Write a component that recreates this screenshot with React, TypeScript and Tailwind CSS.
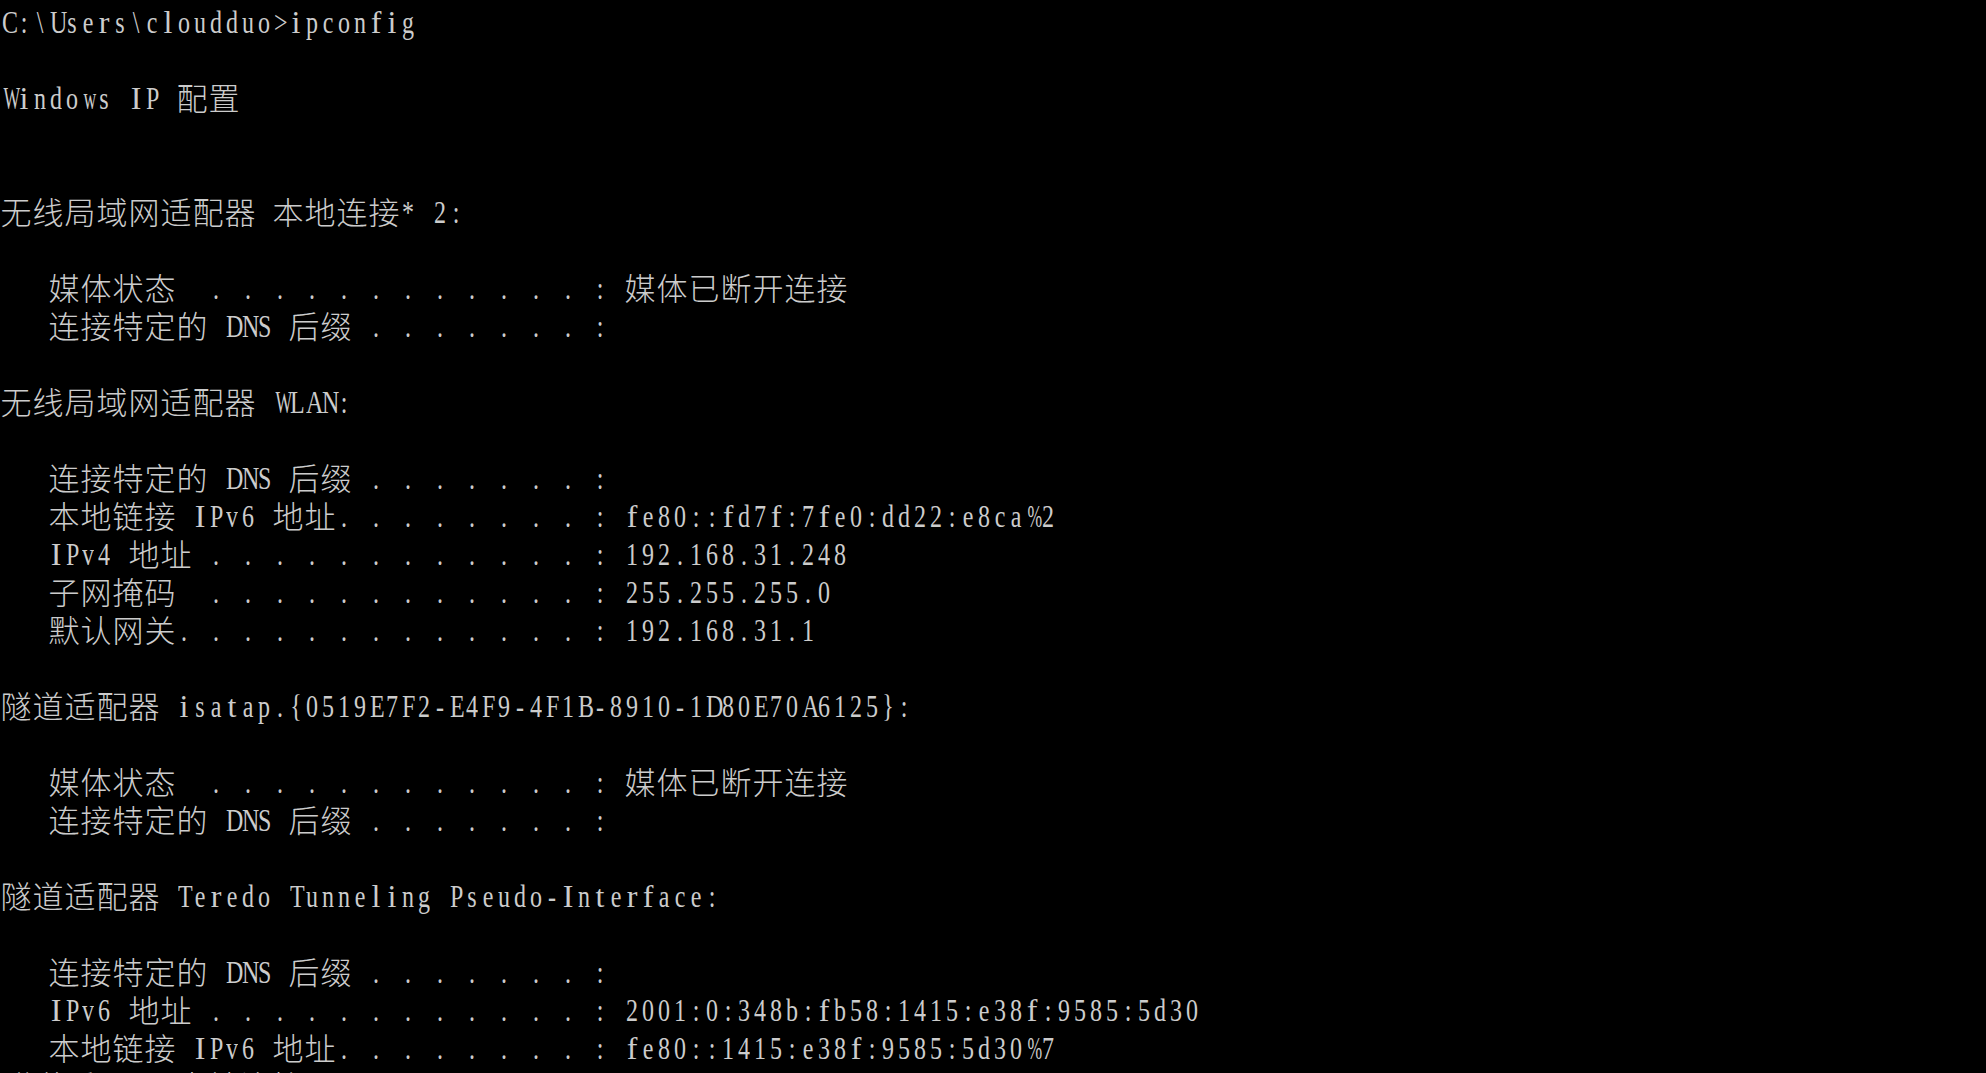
import React from "react";

// console output, one string per row of the character grid
const LINES = [
  "C:\\Users\\cloudduo>ipconfig",
  "",
  "Windows IP 配置",
  "",
  "",
  "无线局域网适配器 本地连接* 2:",
  "",
  "   媒体状态  . . . . . . . . . . . . : 媒体已断开连接",
  "   连接特定的 DNS 后缀 . . . . . . . :",
  "",
  "无线局域网适配器 WLAN:",
  "",
  "   连接特定的 DNS 后缀 . . . . . . . :",
  "   本地链接 IPv6 地址. . . . . . . . : fe80::fd7f:7fe0:dd22:e8ca%2",
  "   IPv4 地址 . . . . . . . . . . . . : 192.168.31.248",
  "   子网掩码  . . . . . . . . . . . . : 255.255.255.0",
  "   默认网关. . . . . . . . . . . . . : 192.168.31.1",
  "",
  "隧道适配器 isatap.{0519E7F2-E4F9-4F1B-8910-1D80E70A6125}:",
  "",
  "   媒体状态  . . . . . . . . . . . . : 媒体已断开连接",
  "   连接特定的 DNS 后缀 . . . . . . . :",
  "",
  "隧道适配器 Teredo Tunneling Pseudo-Interface:",
  "",
  "   连接特定的 DNS 后缀 . . . . . . . :",
  "   IPv6 地址 . . . . . . . . . . . . : 2001:0:348b:fb58:1415:e38f:9585:5d30",
  "   本地链接 IPv6 地址. . . . . . . . : fe80::1415:e38f:9585:5d30%7",
  "隧道适配器 本地连接* 3:",
];

const isWide = (ch: string) => (ch.codePointAt(0) ?? 0) >= 0x2e80;

// how hard each serif glyph is squeezed to sit in a 16px cell
const squeeze = (ch: string) => {
  if ("WMmw%@".includes(ch)) return "scale-x-55";
  if ("iljtfrI".includes(ch)) return "scale-x-100";
  return "scale-x-75";
};

function Cell({ ch }: { ch: string }) {
  if (isWide(ch)) {
    return (
      <span className="box-border h-[38px] w-8 shrink-0 pt-[2px] text-center font-['Noto_Sans_CJK_SC',sans-serif] text-[31px] font-light leading-[38px]">
        {ch}
      </span>
    );
  }
  return (
    <span
      className={`box-border h-[38px] w-4 shrink-0 pt-[3px] text-center font-['Liberation_Serif',serif] text-[32px] leading-[38px] ${squeeze(ch)}`}
    >
      {ch === " " ? "\u00a0" : ch}
    </span>
  );
}

function Line({ text }: { text: string }) {
  return (
    <div className="flex h-[38px] whitespace-pre">
      {Array.from(text).map((ch, i) => (
        <Cell key={i} ch={ch} />
      ))}
    </div>
  );
}

export default function App() {
  return (
    <div className="h-[1073px] w-[1986px] overflow-hidden bg-black text-[#cccccc]">
      {LINES.map((line, i) => (
        <Line key={i} text={line} />
      ))}
    </div>
  );
}
